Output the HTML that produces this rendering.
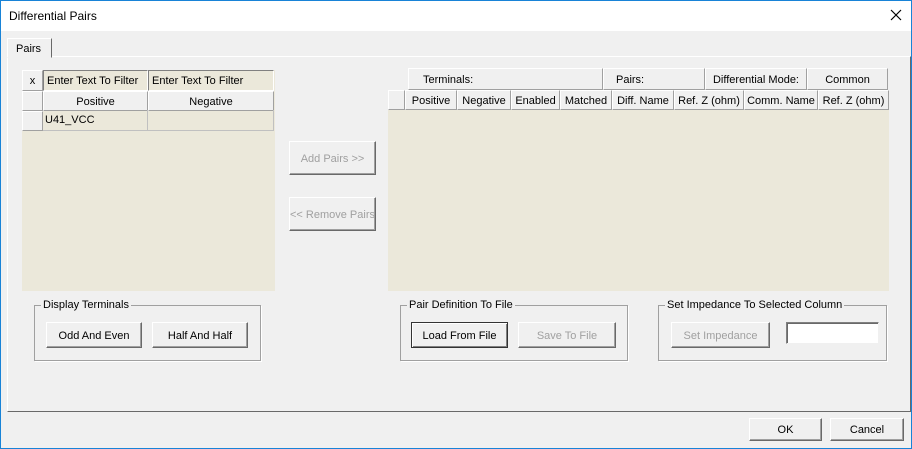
<!DOCTYPE html>
<html><head><style>
*{box-sizing:border-box;margin:0;padding:0}
body{width:912px;height:449px;background:#f0f0f0;font-family:"Liberation Sans",sans-serif;font-size:11px;color:#000;position:relative;overflow:hidden}
.a{position:absolute}
.win{left:0;top:0;width:912px;height:449px;border:1px solid #1883d7}
.title{left:1px;top:1px;width:910px;height:30px;background:#fff}
.btn{position:absolute;background:#f0f0f0;border:1px solid;border-color:#fff #696969 #696969 #fff;box-shadow:inset -1px -1px 0 #a0a0a0;display:flex;align-items:center;justify-content:center;white-space:nowrap;overflow:hidden;padding-top:1px}
.dis{color:#a0a0a0}
.cell{position:absolute;border:1px solid;border-color:#fff #a0a0a0 #a0a0a0 #fff;background:#f0f0f0;display:flex;align-items:center;justify-content:center;white-space:nowrap;overflow:hidden;padding-top:1px}
.grid{background:#ebe8da}
.grp{position:absolute;border:1px solid #a0a0a0;box-shadow:1px 1px 0 #fff}
.grp span{position:absolute;top:-7px;left:6px;background:#f0f0f0;padding:0 2px}
</style></head><body>
<div class="a win"></div>
<div class="a title"></div>
<div class="a" style="left:9px;top:9px;font-size:12px">Differential Pairs</div>
<svg class="a" style="left:890px;top:9px" width="12" height="12"><path d="M1 1L11 11M11 1L1 11" stroke="#000" stroke-width="1.2"/></svg>
<div class="a" style="left:7px;top:56px;width:904px;height:356px;border:1px solid;border-color:#fff #696969 #696969 #fff"></div>
<div class="a" style="left:7px;top:38px;width:45px;height:20px;border:1px solid;border-color:#fff #696969 transparent #fff;background:#f0f0f0;padding:4px 0 0 8px">Pairs</div>
<div class="a grid" style="left:22px;top:70px;width:253px;height:221px"></div>
<div class="cell" style="left:22px;top:70px;width:21px;height:21px">x</div>
<div class="a" style="left:43px;top:70px;width:105px;height:21px;border:1px solid;border-color:#808080 #fff #fff #808080;background:#ebe8da;padding:4px 0 0 3px;white-space:nowrap">Enter Text To Filter</div>
<div class="a" style="left:148px;top:70px;width:126px;height:21px;border:1px solid;border-color:#808080 #fff #fff #808080;background:#ebe8da;padding:4px 0 0 3px">Enter Text To Filter</div>
<div class="cell" style="left:22px;top:91px;width:21px;height:20px"></div>
<div class="cell" style="left:43px;top:91px;width:105px;height:20px">Positive</div>
<div class="cell" style="left:148px;top:91px;width:126px;height:20px">Negative</div>
<div class="cell" style="left:22px;top:111px;width:21px;height:20px"></div>
<div class="a" style="left:43px;top:110px;width:105px;height:21px;border-right:1px solid #c0c0c0;border-bottom:1px solid #c0c0c0;padding:4px 0 0 2px">U41_VCC</div>
<div class="a" style="left:148px;top:110px;width:126px;height:21px;border-right:1px solid #c0c0c0;border-bottom:1px solid #c0c0c0"></div>
<div class="btn dis" style="left:289px;top:141px;width:87px;height:34px">Add Pairs &gt;&gt;</div>
<div class="btn dis" style="left:289px;top:197px;width:87px;height:34px">&lt;&lt; Remove Pairs</div>
<div class="cell" style="left:408px;top:68px;width:195px;height:22px;justify-content:flex-start;padding-left:14px">Terminals:</div>
<div class="cell" style="left:603px;top:68px;width:102px;height:22px;justify-content:flex-start;padding-left:12px">Pairs:</div>
<div class="cell" style="left:705px;top:68px;width:102px;height:22px">Differential Mode:</div>
<div class="cell" style="left:807px;top:68px;width:81px;height:22px">Common</div>
<div class="a grid" style="left:388px;top:90px;width:501px;height:201px"></div>
<div class="cell" style="left:388px;top:90px;width:17px;height:20px"></div>
<div class="cell" style="left:405px;top:90px;width:52px;height:20px">Positive</div>
<div class="cell" style="left:457px;top:90px;width:54px;height:20px">Negative</div>
<div class="cell" style="left:511px;top:90px;width:49px;height:20px">Enabled</div>
<div class="cell" style="left:560px;top:90px;width:52px;height:20px">Matched</div>
<div class="cell" style="left:612px;top:90px;width:62px;height:20px">Diff. Name</div>
<div class="cell" style="left:674px;top:90px;width:70px;height:20px">Ref. Z (ohm)</div>
<div class="cell" style="left:744px;top:90px;width:74px;height:20px">Comm. Name</div>
<div class="cell" style="left:818px;top:90px;width:71px;height:20px">Ref. Z (ohm)</div>
<div class="grp" style="left:34px;top:305px;width:227px;height:56px"><span>Display Terminals</span></div>
<div class="btn" style="left:46px;top:322px;width:96px;height:26px">Odd And Even</div>
<div class="btn" style="left:152px;top:322px;width:96px;height:26px">Half And Half</div>
<div class="grp" style="left:400px;top:305px;width:228px;height:56px"><span>Pair Definition To File</span></div>
<div class="btn" style="left:411px;top:322px;width:97px;height:26px;border:1px solid #333;box-shadow:inset 1px 1px 0 #fff,inset -1px -1px 0 #808080">Load From File</div>
<div class="btn dis" style="left:518px;top:322px;width:98px;height:26px">Save To File</div>
<div class="grp" style="left:658px;top:305px;width:229px;height:56px"><span>Set Impedance To Selected Column</span></div>
<div class="btn dis" style="left:671px;top:322px;width:99px;height:26px">Set Impedance</div>
<div class="a" style="left:786px;top:322px;width:93px;height:22px;background:#fff;border:1px solid;border-color:#808080 #f0f0f0 #f0f0f0 #808080;box-shadow:inset 1px 1px 0 #696969"></div>
<div class="btn" style="left:749px;top:418px;width:73px;height:23px">OK</div>
<div class="btn" style="left:830px;top:418px;width:74px;height:23px">Cancel</div>
</body></html>
